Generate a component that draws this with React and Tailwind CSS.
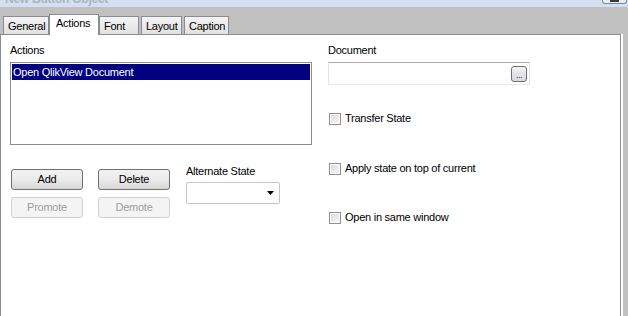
const tabs = [
  { label: "General", w: "w-[46px]", ml: "ml-0" },
  { label: "Actions", w: "w-[50px]", ml: "ml-0", active: true },
  { label: "Font", w: "w-[40px]", ml: "ml-0" },
  { label: "Layout", w: "w-[41px]", ml: "ml-[2px]" },
  { label: "Caption", w: "w-[45px]", ml: "ml-[2px]" },
];

const Checkbox = ({ label, className }) => (
  <div className={"flex items-center " + className}>
    <div className="w-[12px] h-[12px] border border-[#8f8f8f] bg-white p-[1px]">
      <div className="w-full h-full bg-gradient-to-br from-[#dcdcdc] to-[#f6f6f6]" />
    </div>
    <span className="ml-[4px] leading-[13px]">{label}</span>
  </div>
);

const Button = ({ label, disabled }) => (
  <div
    className={
      "w-[72px] h-[21px] rounded-[3px] border flex items-center justify-center leading-[13px] " +
      (disabled
        ? "border-[#d0d0d0] bg-[#f4f4f4] text-[#9d9d9d]"
        : "border-[#707070] bg-gradient-to-b from-[#f2f2f2] via-[#ebebeb] to-[#d6d6d6] text-black")
    }
  >
    {label}
  </div>
);

const App = () => {
  return (
    <div
      className="w-[628px] h-[316px] overflow-hidden bg-[#c0c0c0] flex flex-col text-[11px] tracking-[-0.25px] text-black"
      style={{ fontFamily: '"Liberation Sans", Arial, sans-serif' }}
    >
      {/* title bar, mostly off screen */}
      <div className="h-[7px] bg-[#d2e0f1] flex justify-between overflow-hidden">
        <div className="pl-[5px] -mt-[8px] text-[12px] font-bold text-[#aab4c0] leading-[14px]">
          New Button Object
        </div>
        <div className="w-[25px] h-[4px] mr-[1px] border border-t-0 border-[#7b8898] rounded-b-[3px] bg-[#e8eef5] flex justify-center">
          <div className="w-[9px] h-[2px] bg-[#3a3a3a]" />
        </div>
      </div>

      {/* tab strip */}
      <div className="h-[27px] flex items-end pl-[3px]">
        {tabs.map((t) =>
          t.active ? (
            <div
              key={t.label}
              className={`${t.w} ${t.ml} h-[21px] -mb-[1px] relative z-10 bg-white border border-b-0 border-[#898c95] pl-[6px] pt-[2px] leading-[13px]`}
            >
              {t.label}
            </div>
          ) : (
            <div
              key={t.label}
              className={`${t.w} ${t.ml} h-[18px] bg-gradient-to-b from-[#f4f4f4] to-[#e1e1e1] border border-b-0 border-[#898c95] pl-[4px] pt-[3px] leading-[13px] whitespace-nowrap overflow-hidden`}
            >
              {t.label}
            </div>
          )
        )}
      </div>

      {/* panel */}
      <div className="flex-1 flex">
        <div className="w-[621px] bg-white border border-b-0 border-[#898c95] flex">
          {/* left column */}
          <div className="w-[318px] pl-[9px] pt-[9px] flex flex-col">
            <div className="leading-[13px]">Actions</div>
            <div className="mt-[5px] w-[302px] h-[83px] border border-[#898c95] p-[1px]">
              <div className="h-[16px] bg-[#000080] text-white pl-[1px] leading-[16px]">
                Open QlikView Document
              </div>
            </div>
            <div className="flex mt-[20px]">
              <div className="flex flex-col gap-[7px] mt-[4px] ml-[1px]">
                <div className="flex gap-[15px]">
                  <Button label="Add" />
                  <Button label="Delete" />
                </div>
                <div className="flex gap-[15px]">
                  <Button label="Promote" disabled />
                  <Button label="Demote" disabled />
                </div>
              </div>
              <div className="ml-[16px] flex flex-col">
                <div className="leading-[13px]">Alternate State</div>
                <div className="mt-[4px] w-[94px] h-[22px] border border-[#c5c5c5] rounded-[2px] bg-white flex items-center justify-end pr-[5px]">
                  <svg width="7" height="4" viewBox="0 0 7 4">
                    <path d="M0 0h7L3.5 4z" fill="#000" />
                  </svg>
                </div>
              </div>
            </div>
          </div>

          {/* right column */}
          <div className="pl-[9px] pt-[9px] flex flex-col">
            <div className="leading-[13px]">Document</div>
            <div className="mt-[5px] w-[202px] h-[23px] border border-[#abadb3] border-b-[#e3e9ef] border-l-[#e2e3ea] border-r-[#dbdfe6] bg-white flex items-center justify-end pr-[2px]">
              <div className="w-[16px] h-[16px] rounded-[3px] border border-[#707070] bg-gradient-to-b from-[#f2f2f2] to-[#d8d8d8] flex items-end justify-center pb-[3px]">
                <span className="text-[9px] leading-[5px] tracking-[-0.5px] text-[#1a1a9a]">...</span>
              </div>
            </div>
            <Checkbox label="Transfer State" className="mt-[27px] ml-[1px]" />
            <Checkbox label="Apply state on top of current" className="mt-[37px] ml-[1px]" />
            <Checkbox label="Open in same window" className="mt-[36px] ml-[1px]" />
          </div>
        </div>
        <div className="w-[2px] bg-white" />
      </div>
    </div>
  );
};

export default App;
